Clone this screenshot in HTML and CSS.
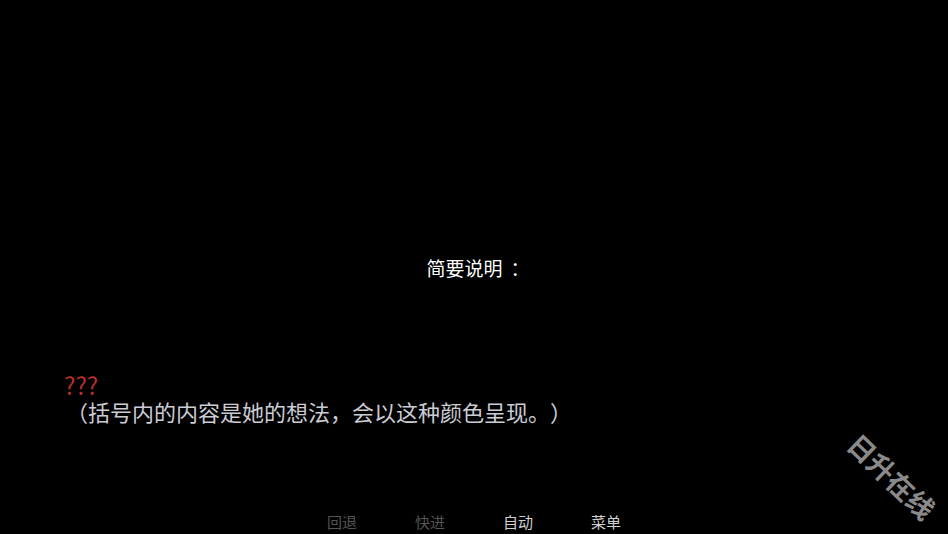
FILE: index.html
```
<!DOCTYPE html>
<html lang="zh-CN">
<head>
<meta charset="utf-8">
<title>简要说明</title>
<link rel="stylesheet" href="styles.css">
</head>
<body>
<div class="screen">
  <div class="title">简要说明<span class="colon">：</span></div>
  <div class="dialogue">
    <div class="name">???</div>
    <div class="text">（括号内的内容是她的想法，会以这种颜色呈现。）</div>
  </div>
  <nav class="menu">
    <span class="item dim">回退</span>
    <span class="item dim">快进</span>
    <span class="item">自动</span>
    <span class="item">菜单</span>
  </nav>
  <div class="watermark">日升在线</div>
</div>
</body>
</html>
```
FILE: styles.css
```
html, body {
  margin: 0;
  padding: 0;
  background: #000;
}
.screen {
  position: relative;
  width: 948px;
  height: 534px;
  overflow: hidden;
  display: flex;
  flex-direction: column;
  font-family: "Noto Sans CJK SC", "Noto Sans", sans-serif;
  text-spacing-trim: space-all;
  background: #000;
}
.title {
  padding-top: 256px;
  height: 24px;
  line-height: 24px;
  font-size: 19px;
  color: #fff;
  text-align: center;
}
.colon {
  display: inline-block;
  width: 1em;
  box-sizing: border-box;
  padding-left: 0.42em;
  overflow: visible;
  white-space: nowrap;
  vertical-align: top;
}
.dialogue {
  margin-top: 92px;
  padding-left: 64px;
}
.name {
  height: 26px;
  line-height: 26px;
  font-size: 24px;
  color: #b8302a;
}
.text {
  height: 26px;
  line-height: 26px;
  font-size: 22px;
  color: #cbccd4;
  margin-left: 2px;
  white-space: nowrap;
}
.menu {
  margin-top: auto;
  padding-bottom: 2px;
  display: flex;
  justify-content: center;
}
.item {
  width: 88px;
  height: 20px;
  line-height: 20px;
  text-align: center;
  font-size: 15px;
  color: #d0d0d0;
}
.item.dim {
  color: #555;
}
.watermark {
  position: absolute;
  left: 892px;
  top: 476px;
  transform: translate(-50%, -50%) rotate(44deg);
  font-size: 27px;
  font-weight: bold;
  color: #8a8a8a;
  white-space: nowrap;
  line-height: 1;
}
```
